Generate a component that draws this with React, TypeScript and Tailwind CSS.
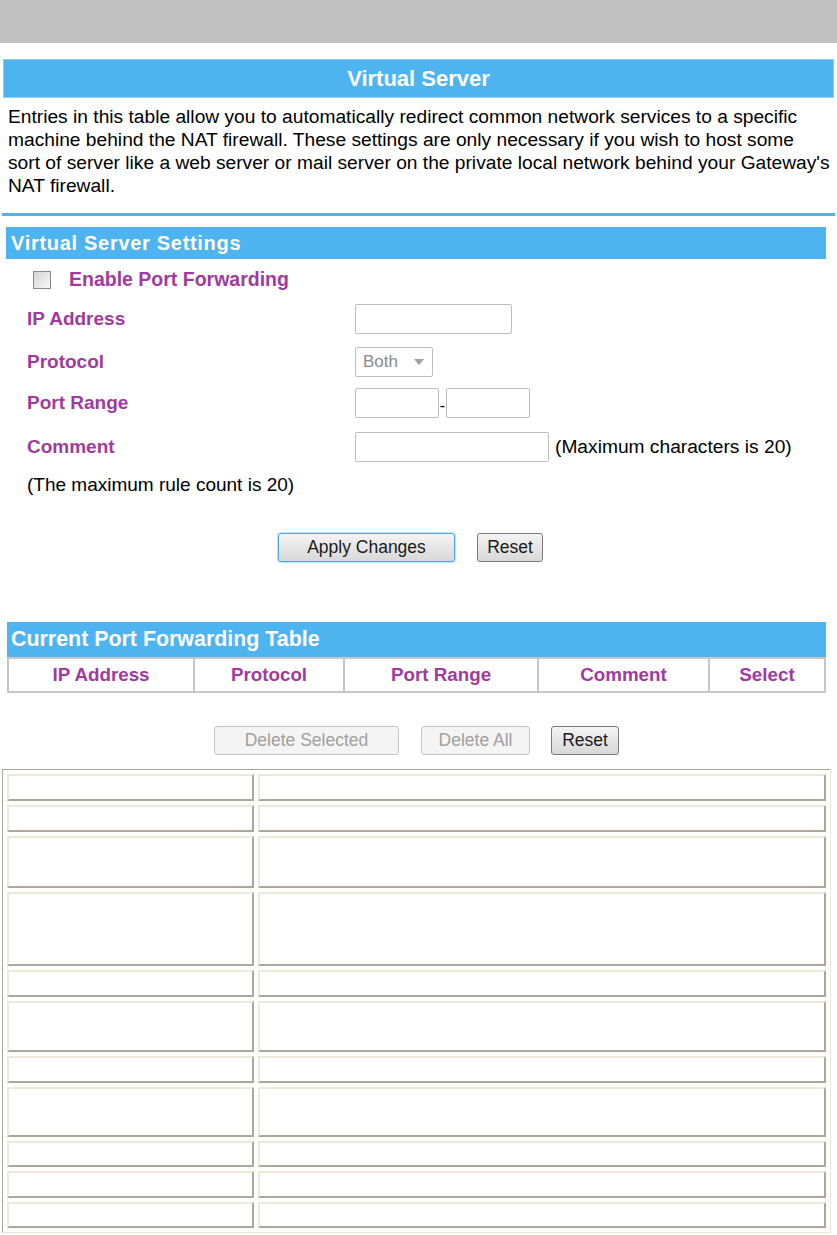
import React from 'react';

const purple = 'text-[#9f3aa0]';

function FormRow({ label, children, top }: { label: string; children: React.ReactNode; top: string }) {
  return (
    <div className={`flex items-center h-[30px] ${top}`}>
      <div className={`w-[355px] pl-[27px] text-[19px] font-bold ${purple}`}>{label}</div>
      <div className="flex items-center">{children}</div>
    </div>
  );
}

function TextBox({ w }: { w: string }) {
  return <div className={`${w} h-[30px] border border-[#bdbdbd] rounded-[2px] bg-white`} />;
}

function Button({ label, w, variant }: { label: string; w: string; variant: 'focus' | 'normal' | 'disabled' }) {
  const styles = {
    focus: 'border-[#4aa8e0] bg-gradient-to-b from-[#f4f4f4] to-[#d8d8d8] text-[#1a1a1a] shadow-[0_0_0_1px_#bfe3f7]',
    normal: 'border-[#7a7a7a] bg-gradient-to-b from-[#f4f4f4] to-[#d8d8d8] text-[#1a1a1a]',
    disabled: 'border-[#c4c4c4] bg-[#f4f4f4] text-[#a0a0a0]',
  }[variant];
  return (
    <div className={`${w} h-[29px] flex items-center justify-center border rounded-[3px] text-[17.5px] ${styles}`}>
      {label}
    </div>
  );
}

const rowHeights = ['h-[27px]', 'h-[27px]', 'h-[52px]', 'h-[74px]', 'h-[27px]', 'h-[51px]', 'h-[27px]', 'h-[50px]', 'h-[26px]', 'h-[27px]', 'h-[26px]'];

export default function App() {
  return (
    <div className="w-[837px] h-[1235px] bg-white overflow-hidden font-['Liberation_Sans',Arial,sans-serif] text-black">
      <div className="h-[43px] bg-[#c0c0c0]" />

      <div className="mt-[16px] ml-[3px] w-[831px] h-[39px] bg-[#4eb4f0] border border-[#8fcdf5] flex items-center justify-center text-white font-bold text-[22px]">
        Virtual Server
      </div>

      <p className="mt-[7px] pl-[8px] text-[19.2px] leading-[23px] whitespace-nowrap">
        Entries in this table allow you to automatically redirect common network services to a specific
        <br />
        machine behind the NAT firewall. These settings are only necessary if you wish to host some
        <br />
        sort of server like a web server or mail server on the private local network behind your Gateway's
        <br />
        NAT firewall.
      </p>

      <div className="mt-[16px] ml-[2px] w-[833px] h-[3px] bg-[#4eb4f0]" />

      <div className="mt-[11px] ml-[6px] w-[820px] h-[32px] bg-[#4eb4f0] flex items-center pl-[5px] text-white font-bold text-[20px] tracking-[0.7px]">
        Virtual Server Settings
      </div>

      <div className="mt-[6px] h-[30px] flex items-center">
        <div className="ml-[33px] w-[18px] h-[18px] border border-[#8a8a8a] bg-gradient-to-br from-[#d6d6d6] to-[#f6f6f6]" />
        <span className={`ml-[18px] text-[19.5px] font-bold ${purple}`}>Enable Port Forwarding</span>
      </div>

      <FormRow label="IP Address" top="mt-[9px]">
        <TextBox w="w-[157px]" />
      </FormRow>
      <FormRow label="Protocol" top="mt-[13px]">
        <div className="w-[78px] h-[30px] border border-[#bdbdbd] rounded-[2px] bg-white flex items-center justify-between pl-[7px] pr-[8px] text-[17px] text-[#8a8a8a]">
          <span>Both</span>
          <svg width="10" height="6" viewBox="0 0 10 6">
            <path d="M0 0 L10 0 L5 6 Z" fill="#a0a0a0" />
          </svg>
        </div>
      </FormRow>
      <FormRow label="Port Range" top="mt-[11px]">
        <TextBox w="w-[84px]" />
        <span className="w-[7px] text-center text-[16px] leading-none mt-[6px]">-</span>
        <TextBox w="w-[84px]" />
      </FormRow>
      <FormRow label="Comment" top="mt-[14px]">
        <TextBox w="w-[194px]" />
        <span className="ml-[6px] text-[19.2px] font-normal text-black">(Maximum characters is 20)</span>
      </FormRow>

      <div className="mt-[11px] pl-[27px] text-[19px] leading-[23px]">(The maximum rule count is 20)</div>

      <div className="mt-[37px] w-[821px] flex justify-center gap-[22px]">
        <Button label="Apply Changes" w="w-[177px]" variant="focus" />
        <Button label="Reset" w="w-[66px]" variant="normal" />
      </div>

      <div className="mt-[60px] ml-[7px] w-[819px] h-[35px] bg-[#4eb4f0] flex items-center pl-[4px] text-white font-bold text-[21.4px]">
        Current Port Forwarding Table
      </div>
      <div className={`ml-[7px] w-[819px] h-[36px] flex border-2 border-[#c6c6c6] text-[18.8px] font-bold ${purple}`}>
        {[
          ['IP Address', 'w-[184px]'],
          ['Protocol', 'w-[150px]'],
          ['Port Range', 'w-[194px]'],
          ['Comment', 'w-[171px]'],
          ['Select', 'flex-1'],
        ].map(([t, w], i) => (
          <div key={t} className={`${w} flex items-center justify-center ${i > 0 ? 'border-l-2 border-[#c6c6c6]' : ''}`}>
            {t}
          </div>
        ))}
      </div>

      <div className="mt-[33px] w-[833px] flex justify-center">
        <Button label="Delete Selected" w="w-[185px]" variant="disabled" />
        <div className="w-[22px]" />
        <Button label="Delete All" w="w-[109px]" variant="disabled" />
        <div className="w-[21px]" />
        <Button label="Reset" w="w-[68px]" variant="normal" />
      </div>

      <div className="mt-[14px] ml-[2px] w-[829px] border border-t-[#aca899] border-l-[#aca899] border-b-[#ece9d8] border-r-[#ece9d8] p-[4px] flex flex-col gap-[4px]">
        {rowHeights.map((h, i) => (
          <div key={i} className={`flex gap-[4px] ${h}`}>
            <div className="w-[247px] border-2 border-t-[#ece9d8] border-l-[#ece9d8] border-b-[#aca899] border-r-[#aca899]" />
            <div className="flex-1 border-2 border-t-[#ece9d8] border-l-[#ece9d8] border-b-[#aca899] border-r-[#aca899]" />
          </div>
        ))}
      </div>
    </div>
  );
}
